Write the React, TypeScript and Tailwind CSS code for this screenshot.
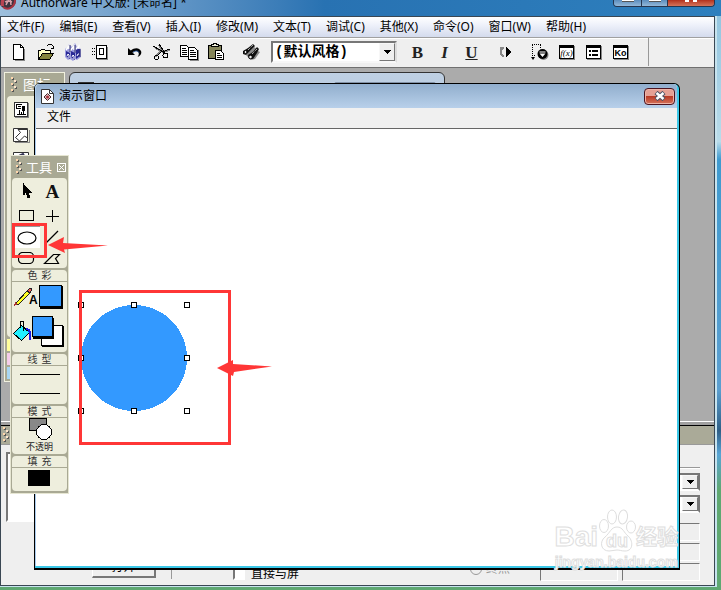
import React from "react";

type IconProps = { w?: number; h?: number; children: React.ReactNode; smooth?: boolean };

function Icon({ w = 18, h = 18, children, smooth }: IconProps) {
  return (
    <svg
      width={w}
      height={h}
      viewBox={`0 0 ${w} ${h}`}
      fill="none"
      stroke="none"
      shapeRendering={smooth ? "auto" : "crispEdges"}
      aria-hidden="true"
      className="shrink-0"
    >
      {children}
    </svg>
  );
}

const menus = [
  "文件(F)", "编辑(E)", "查看(V)", "插入(I)", "修改(M)", "文本(T)",
  "调试(C)", "其他(X)", "命令(O)", "窗口(W)", "帮助(H)",
];

function ToolButton({ label, children }: { label: string; children: React.ReactNode }) {
  return (
    <button aria-label={label} className="flex h-6 w-[27px] shrink-0 items-center justify-center">
      {children}
    </button>
  );
}

function NewIcon() {
  return (
    <Icon>
      <path d="M5 17h9v-11h1v12h-10z" fill="#888" />
      <path d="M3.500 1.500h7l3 3v12h-10z" fill="#fff" stroke="#000" />
      <path d="M10.500 1.500v3h3" stroke="#000" />
    </Icon>
  );
}
function OpenIcon() {
  return (
    <Icon>
      <path d="M1.500 16.500v-9h2l1-1h3l1 1h5v3" fill="#ffffc6" stroke="#000" />
      <path d="M1.500 16.500l4-6h11l-4 6z" fill="#84843c" stroke="#000" />
      <path d="M9.500 3.500l2-2h3l2 2v2m-3 0h3v-3" stroke="#000" />
    </Icon>
  );
}
function SaveIcon() {
  return (
    <Icon smooth>
      <path d="M1 6l3-2 1-3 3 3 3-4 2 4 2-1 2 4v7l-4 3-2-1-2 2-3-2-2 1-3-3z" fill="#9c9cde" />
      <path d="M2 8l4 2v6l-4-3zM7 8l4 2v7l-4-3zM12 7l4-2v8l-4 3z" fill="#292996" />
      <path d="M2 7l3-4v3M6 8l4-5v4M12 6l3-3v3" stroke="#fff" strokeWidth="1.500" />
      <path d="M3 13l1-2 1 1v3M8 14l1-2 1 1v3M13 13l1-2 1 0" stroke="#fff" />
      <path d="M6 2v7M11 2v8M16 6v8" stroke="#34346e" />
    </Icon>
  );
}
function ImportIcon() {
  return (
    <Icon>
      <path d="M6 16h10V4h1v13H6z" fill="#888" />
      <path d="M5.500 2.500h10v13h-10z" fill="#fff" stroke="#000" />
      <path d="M8.500 5.500h4v6h-4z" stroke="#000" />
      <path d="M1 5.500h6M1 8.500h6M1 11.500h6" stroke="#000" strokeDasharray="1 1" />
    </Icon>
  );
}
function UndoIcon() {
  return (
    <Icon smooth>
      <path d="M2 5v7h7l-2.500-2.500c2-2 5-2 6 0 .8 1.700 0 3-1 4.500 3-1.200 4.500-3.500 3.500-6C13.500 4.500 8.500 4 4.800 7.600z" fill="#000" />
      <path d="M7 9.500c2-2 5-2 6 0" stroke="#23539c" />
    </Icon>
  );
}
function CutIcon() {
  return (
    <Icon w={20}>
      <path d="M7 2l6 9M2 4l11 6M10 9l8-2M9 8L3 14" stroke="#888" strokeWidth="2" />
      <path d="M7 1l6 9M1 3l12 7M10 9l8-3M10 8l-5 5" stroke="#000" strokeWidth="1" />
      <circle cx="4.500" cy="14.500" r="2" stroke="#000" />
      <circle cx="13.500" cy="12.500" r="2.500" stroke="#000" />
    </Icon>
  );
}
function CopyIcon() {
  return (
    <Icon w={20}>
      <path d="M1.500 2.500h6l2 2v9h-8z" fill="#fff" stroke="#000" />
      <path d="M3 5.500h4M3 7.500h5M3 9.500h5M3 11.500h5" stroke="#000" />
      <path d="M11 17h8V7h1v11h-9z" fill="#888" />
      <path d="M9.500 4.500h6l3 3v9h-9z" fill="#fff" stroke="#000" />
      <path d="M11 7.500h4M11 9.500h6M11 11.500h6M11 13.500h6" stroke="#000" />
    </Icon>
  );
}
function PasteIcon() {
  return (
    <Icon>
      <path d="M1.500 2.500h13v13h-13z" fill="#84845a" stroke="#000" />
      <path d="M4.500 3.500h7v-2h-2v-1h-3v1h-2z" fill="#efefdc" stroke="#000" />
      <path d="M8.500 7.500h5l3 3v6h-8z" fill="#fff" stroke="#000" />
      <path d="M10 10.500h3M10 12.500h5M10 14.500h5" stroke="#000" />
    </Icon>
  );
}
function FindIcon() {
  return (
    <Icon smooth>
      <path d="M4 12l8-8 3 2-3 5 4-3 2 1-5 7-4 1z" fill="#8a8a8a" />
      <path d="M1 8l5-3 5-4 2 2-4 4-5 5-3-1zM6 12l5-3 4-5 2 2-2 4-4 6-4-1z" fill="#111" />
      <circle cx="3.500" cy="9" r="1.500" fill="#efefef" stroke="#000" />
      <circle cx="8.500" cy="14" r="1.800" fill="#efefef" stroke="#000" />
      <path d="M6 7l5-5M10 11l5-5" stroke="#eee" strokeDasharray="1 1" />
    </Icon>
  );
}
function StepIcon() {
  return (
    <Icon>
      <path d="M3 4h4v2H6v1H5v4h1v1h1v2H5v-1H4v-1H3z" fill="#888" />
      <path d="M9 4h1v1h1v1h1v1h1v1h1v2h-1v1h-1v1h-1v1h-1v1H9z" fill="#000" />
    </Icon>
  );
}
function ControlIcon() {
  return (
    <Icon smooth>
      <path d="M1 1.500h9M9.500 2v3M1.500 2v13M1 12.500h3" stroke="#000" strokeDasharray="1 1" />
      <path d="M0 14h4l-2 3z" fill="#000" />
      <circle cx="12.500" cy="12" r="5" fill="#888" />
      <circle cx="11.500" cy="11" r="5" fill="#000" />
      <path d="M8.500 8.500h6v1h-6zM8.500 10.500h6l-3 3.500z" fill="#fff" />
    </Icon>
  );
}
function Boxed({ children }: { children: React.ReactNode }) {
  return (
    <span className="flex h-[14px] w-[15px] items-center justify-center overflow-hidden border border-t-[3px] border-black bg-white leading-none text-black shadow-[1px_1px_0_#888]">
      {children}
    </span>
  );
}

function Gripper() {
  return (
    <Icon w={8} h={16}>
      {[0, 6, 12].map((y) => (
        <g key={y}>
          <path d={`M2 ${y}h2v2h-2z`} fill="#ffd7ad" />
          <path d={`M4 ${y + 1}h1v2h-2v-1h1z`} fill="#555" />
        </g>
      ))}
      {[3, 9].map((y) => (
        <g key={y}>
          <path d={`M5 ${y}h2v2h-2z`} fill="#ffe6cc" />
          <path d={`M7 ${y + 1}h1v2h-2v-1h1z`} fill="#555" />
        </g>
      ))}
    </Icon>
  );
}

function TitleBar() {
  return (
    <header className="flex h-4 items-start">
      <svg width="18" height="18" viewBox="0 0 18 18" className="-mt-2 shrink-0" aria-hidden="true">
        <circle cx="7.500" cy="8.500" r="8.500" fill="#3c3540" />
        <path d="M1 14C-1 6 6-1 14 4c-6-2-11 2-10 10z" fill="#b94352" />
        <path d="M6 13l4-8 1 8M5 10c3-2 5-1 7 0" stroke="#dba1aa" strokeWidth="1.500" fill="none" />
        <path d="M3 15c5 4 12 0 12-7" stroke="#a83442" strokeWidth="2" fill="none" />
      </svg>
      <h1 className="-mt-[6px] ml-[3px] flex-1 whitespace-nowrap text-[12px] leading-[18px] text-black">
        Authorware 中文版: [未命名] *
      </h1>
      <div className="mr-1.5 flex h-[7px] overflow-hidden rounded-b border border-t-0 border-[#26364f]">
        <button aria-label="最小化" className="flex w-7 justify-center border-r border-[#26364f] bg-gradient-to-b from-[#5b8dbd] to-[#94b8d8]">
          <span className="h-0.5 w-3 border-b border-[#555] bg-white" />
        </button>
        <button aria-label="最大化" className="flex w-[26px] justify-center border-r border-[#26364f] bg-gradient-to-b from-[#5b8dbd] to-[#94b8d8]">
          <span className="h-0.5 w-3 border-b border-[#555] bg-white" />
        </button>
        <button aria-label="关闭" className="flex w-[46px] justify-center gap-1 bg-gradient-to-b from-[#b3301c] to-[#d4735a]">
          <span className="h-0.5 w-1 bg-white" />
          <span className="h-0.5 w-1 bg-white" />
        </button>
      </div>
    </header>
  );
}

function Toolbar() {
  return (
    <div className="flex h-[31px] items-center border-b border-[#707070] bg-[#efefef] pl-1 shadow-[inset_0_1px_0_#a0a0a0,inset_0_2px_0_#fff]">
      <ToolButton label="新建"><NewIcon /></ToolButton>
      <ToolButton label="打开"><OpenIcon /></ToolButton>
      <ToolButton label="保存"><SaveIcon /></ToolButton>
      <ToolButton label="导入"><ImportIcon /></ToolButton>
      <div className="ml-2 flex">
        <ToolButton label="撤消"><UndoIcon /></ToolButton>
        <ToolButton label="剪切"><CutIcon /></ToolButton>
        <ToolButton label="复制"><CopyIcon /></ToolButton>
        <ToolButton label="粘贴"><PasteIcon /></ToolButton>
      </div>
      <div className="ml-2 mr-[7px] flex">
        <ToolButton label="查找"><FindIcon /></ToolButton>
      </div>
      <div className="relative h-[22px] w-[126px] shrink-0 border-2 border-[#777] border-b-[#f7f7f7] border-r-[#ddd] bg-white">
        <select
          aria-label="文本风格"
          className="block h-full w-full appearance-none bg-white pl-0.5 font-['Liberation_Mono','Noto_Sans_CJK_SC',monospace] text-[14px] font-bold leading-[18px] text-black"
        >
          <option>(默认风格)</option>
        </select>
        <ComboArrow />
      </div>
      <div className="ml-[7px] flex font-['Liberation_Serif',serif] text-[17px] font-bold leading-none text-[#222]">
        <ToolButton label="粗体">B</ToolButton>
        <ToolButton label="斜体"><i>I</i></ToolButton>
        <ToolButton label="下划线"><u>U</u></ToolButton>
      </div>
      <div className="ml-[7px] flex">
        <ToolButton label="控制面板"><StepIcon /></ToolButton>
      </div>
      <div className="ml-[7px] flex">
        <ToolButton label="运行"><ControlIcon /></ToolButton>
        <ToolButton label="函数">
          <Boxed><i className="font-['Liberation_Serif',serif] text-[9px]">f(x)</i></Boxed>
        </ToolButton>
        <ToolButton label="变量">
          <Boxed>
            <Icon w={11} h={8}>
              <path d="M1 1h2v2H1zM4 1h6v2H4zM1 5h2v2H1zM4 5h6v2H4z" fill="#000" />
            </Icon>
          </Boxed>
        </ToolButton>
        <ToolButton label="知识对象">
          <Boxed><b className="font-['Liberation_Sans',sans-serif] text-[9px]">Ko</b></Boxed>
        </ToolButton>
      </div>
      <span className="ml-[14px] h-7 w-px bg-[#999]" />
    </div>
  );
}

function ComboArrow() {
  return (
    <span className="pointer-events-none absolute bottom-0 right-0 top-0 flex w-4 items-center justify-center border border-b-[#777] border-l-[#f7f7f7] border-r-[#777] border-t-[#f7f7f7] bg-[#efefef]">
      <Icon w={7} h={4}>
        <path d="M0 0h7v1H6v1H5v1H4v1H3V3H2V2H1V1H0z" fill="#000" />
      </Icon>
    </span>
  );
}

function IconPalette() {
  return (
    <aside className="absolute bottom-[39px] left-[3px] top-1 flex w-[61px] flex-col border border-[#f1f1df] bg-[#a9a994] p-0.5 pt-0">
      <div className="flex h-[23px] items-center gap-1.5 pl-0.5 text-[14px] text-white">
        <Gripper />
        <span className="whitespace-nowrap">图标</span>
      </div>
      <div className="flex flex-1 flex-col items-start gap-2 rounded bg-[#eeeedd] pl-1.5 pt-[5px]">
        <Icon w={17} h={17}>
          <path d="M2 16h13V2h1v15H2z" fill="#888" />
          <path d="M1.500 1.500h13v14h-13z" fill="#fff" stroke="#333" />
          <path d="M3 3h6v1H3zM3 4h1v4H3zM4 7h4v1H4zM9 5h3v5H9zM5 5h3v1H5zM6 9h1v4H6zM4 13h9v1H4zM10 10h1v3h-1zM8 11h1v2H8z" fill="#000" />
        </Icon>
        <Icon w={17} h={17} smooth>
          <path d="M2 16h14V4h1v13H2z" fill="#888" />
          <path d="M.5 2.500h14v13H.5z" fill="#fff" stroke="#333" />
          <path d="M2.500 11.500l5-5-2.500-3h9.500V12l-3-2-5 5z" fill="#fff" stroke="#333" />
        </Icon>
        <Icon w={17} h={17} smooth>
          <path d="M.5 1.500h15v13h-15z" fill="#fff" stroke="#333" />
          <path d="M6 5l4-2 3 5" stroke="#335" strokeWidth="2" />
        </Icon>
      </div>
      <div className="mt-0.5 h-3 w-full bg-[#ffff9c]" />
      <div className="mt-0.5 h-3 w-full bg-[#f5cdea]" />
      <div className="mt-0.5 h-3 w-full bg-[#a8d6f3]" />
    </aside>
  );
}

function FieldBox({ className }: { className: string }) {
  return <div className={`h-[18px] border border-[#777] border-b-white border-r-white bg-[#efefef] ${className}`} />;
}

function PropertyCombo({ label }: { label: string }) {
  return (
    <div className="relative h-[18px] border-2 border-[#777] border-b-white border-r-[#777] bg-white">
      <select aria-label={label} className="block h-full w-full appearance-none bg-white" />
      <ComboArrow />
    </div>
  );
}

function PropertiesPanel() {
  return (
    <section className="shrink-0 border-t border-white bg-[#efefef]">
      <div className="h-[3px] bg-[#a0a0a0]" />
      <div className="flex h-5 items-center border-b border-t border-b-[#999] border-t-black bg-[#aaaa98]">
        <Gripper />
      </div>
      <div className="flex h-[140px]">
        <div className="flex flex-1 flex-col justify-between pl-[5px] pt-[7px]">
          <div className="h-[70px] w-[90px] border-2 border-[#777] border-b-white border-r-white bg-white" />
          <div className="flex h-7 items-start text-[12px] text-black">
            <button className="ml-[86px] h-[21px] w-16 border border-b-2 border-r-2 border-white border-b-[#777] border-r-[#777] bg-[#efefef] leading-[18px]">
              打开
            </button>
            <span className="ml-[15px] h-[22px] w-px bg-[#999]" />
            <label className="ml-[61px] flex h-[22px] items-center gap-1.5 self-end leading-4">
              <input type="checkbox" className="size-3 appearance-none border-2 border-b-white border-l-[#777] border-r-white border-t-[#777] bg-white" />
              直接与屏
            </label>
            <label className="ml-auto mr-[30px] flex h-6 items-center gap-1 leading-4 text-[#999]">
              <input type="radio" disabled className="size-3 appearance-none rounded-full border border-[#999] bg-[#efefef]" />
              终点
            </label>
          </div>
        </div>
        <div className="mr-[14px] flex w-[160px] flex-col pt-[22px]">
          <div className="mb-1 h-0.5 border-t border-[#999] bg-white" />
          <div className="flex flex-col gap-1">
            <PropertyCombo label="开始" />
            <PropertyCombo label="速率" />
          </div>
          <div className="mt-2.5 flex flex-col gap-0.5">
            <FieldBox className="w-full" />
            <FieldBox className="w-full" />
            <div className="flex gap-1">
              <FieldBox className="flex-1" />
              <FieldBox className="flex-1" />
            </div>
          </div>
        </div>
      </div>
    </section>
  );
}

const handlePositions = [5, 58, 111];

function Watermark() {
  return (
    <div className="absolute bottom-[19px] right-[43px] flex flex-col items-center font-['Liberation_Sans','Noto_Sans_CJK_SC',sans-serif] font-bold text-white [-webkit-text-stroke:1px_#dedede]">
      <div className="flex h-11 items-end">
        <span className="text-[28px] leading-8">Bai</span>
        <span className="relative flex h-11 w-[38px] items-end justify-center">
          <svg width="38" height="44" viewBox="0 0 38 44" className="absolute inset-0" fill="#fff" stroke="#dedede" aria-hidden="true">
            <ellipse cx="6" cy="17" rx="4.500" ry="6.500" />
            <ellipse cx="14" cy="8" rx="4.500" ry="7" />
            <ellipse cx="25" cy="8" rx="4.500" ry="7" transform="rotate(8 25 8)" />
            <ellipse cx="33" cy="18" rx="4.500" ry="6" />
            <path d="M19 18c6 0 7 6 11 9 5 4 6 15-3 15-4 0-5-1-8-1s-5 1-8 1c-8 0-10-9-4-14 5-4 6-10 12-10z" />
          </svg>
          <span className="relative text-[18px] leading-6">du</span>
        </span>
        <span className="text-[21px] leading-8">经验</span>
      </div>
      <span className="text-[14px] leading-[18px]">jingyan.baidu.com</span>
    </div>
  );
}

function PresentationWindow() {
  return (
    <section className="absolute bottom-5 left-[34px] right-[41px] top-[83px] flex rounded-t-md border border-b-2 border-black bg-[#3cc8e8]">
      <div className="mb-0.5 mr-0.5 flex min-w-0 flex-1 flex-col rounded-t border-l border-[#a9cbee] bg-white">
        <div className="flex h-6 shrink-0 items-center rounded-t bg-gradient-to-b from-[#91aecd] to-[#b8d0ea] pl-[5px] pr-0.5">
          <Icon w={13} h={15} smooth>
            <path d="M.5.5h8l4 4v10H.5z" fill="#fff" stroke="#333" />
            <path d="M8.500.5v4h4" stroke="#333" />
            <path d="M6.500 4.500l3.500 3.500-3.500 3.500L3 8z" fill="#e3b9b9" stroke="#4b292d" />
            <circle cx="6.500" cy="8" r="1.500" fill="#a4323c" />
          </Icon>
          <h2 className="ml-[5px] flex-1 text-[12px] leading-4 text-black">演示窗口</h2>
          <button aria-label="关闭窗口" className="flex h-[17px] w-[31px] items-center justify-center rounded-sm border border-[#4c1420] bg-gradient-to-b from-[#e5a094] from-45% via-[#b93a25] via-50% to-[#d3715a] shadow-[inset_0_0_0_1px_#eeb4a8]">
            <svg width="12" height="10" viewBox="0 0 12 10" aria-hidden="true">
              <path d="M2 1.500l8 7M10 1.500l-8 7" stroke="#4b5365" strokeWidth="4.500" />
              <path d="M2.500 2l7 6M9.500 2l-7 6" stroke="#fff" strokeWidth="2.500" />
            </svg>
          </button>
        </div>
        <nav className="flex h-[21px] shrink-0 items-start border-b border-[#666] bg-[#f0f0f0] pl-[11px]">
          <button className="text-[12px] leading-[18px] text-black">文件</button>
        </nav>
        <div className="relative flex-1 overflow-hidden bg-white">
          <svg width="116" height="116" viewBox="0 0 116 116" className="absolute left-10 top-[171px]" shapeRendering="crispEdges" aria-label="圆形">
            <circle cx="58" cy="58" r="53" fill="#3399ff" />
            {handlePositions.flatMap((x) =>
              handlePositions
                .filter((y) => !(x === 58 && y === 58))
                .map((y) => (
                  <rect key={`${x}-${y}`} x={x - 2.5} y={y - 2.5} width="5" height="5" fill="#fff" stroke="#000" />
                )),
            )}
          </svg>
        </div>
      </div>
    </section>
  );
}

function PaletteLabel({ children }: { children: React.ReactNode }) {
  return (
    <h3 className="mt-0.5 flex h-3 justify-center gap-1 rounded-t border-b border-[#a9a994] bg-[#eeeedd] text-[10px] font-normal leading-[10px] text-[#333]">
      {children}
    </h3>
  );
}

function DrawTool({ label, children, active }: { label: string; children: React.ReactNode; active?: boolean }) {
  return (
    <button
      aria-label={label}
      className={active ? "flex items-center justify-center border-t border-[#999] bg-white" : "flex items-center justify-center"}
    >
      {children}
    </button>
  );
}

function ToolPalette() {
  return (
    <aside className="absolute left-2.5 top-[155px] w-[59px] border border-[#e6e6d2] bg-[#a9a994] px-px pb-0.5">
      <div className="flex h-[22px] items-center pl-0.5 text-[13px] text-white">
        <Gripper />
        <h2 className="ml-1 flex-1 whitespace-nowrap leading-4">工具</h2>
        <button aria-label="关闭工具" className="mr-px">
          <Icon w={9} h={9}>
            <path d="M.5.5h8v8h-8z" stroke="#fff" />
            <path d="M2 2l5 5M7 2l-5 5" stroke="#fff" />
          </Icon>
        </button>
      </div>

      <div className="grid h-[90px] grid-cols-2 grid-rows-[26px_22px_22px_20px] rounded bg-[#eeeedd] px-0.5">
        <DrawTool label="选择">
          <Icon w={14} h={16}>
            <path d="M3 0v12h2v-2h1v2h1v3h3v-3H9v-2h3V9h-1V8h-1V7H9V6H8V5H7V4H6V3H5V2H4V0z" fill="#000" />
          </Icon>
        </DrawTool>
        <DrawTool label="文本">
          <span className="font-['Liberation_Serif',serif] text-[19px] font-bold leading-none text-[#111]">A</span>
        </DrawTool>
        <DrawTool label="矩形">
          <Icon w={16} h={14}><path d="M.5 2.500h14v10H.5z" stroke="#000" /></Icon>
        </DrawTool>
        <DrawTool label="直线">
          <Icon w={14} h={14}><path d="M7.500 2v12M1 8.500h13" stroke="#000" /></Icon>
        </DrawTool>
        <DrawTool label="椭圆" active>
          <Icon w={20} h={14} smooth><ellipse cx="10" cy="7" rx="9" ry="6" fill="#fff" stroke="#000" strokeWidth="1.200" /></Icon>
        </DrawTool>
        <DrawTool label="斜线">
          <Icon w={14} h={14} smooth><path d="M1 13L13 1" stroke="#000" strokeWidth="1.200" /></Icon>
        </DrawTool>
        <DrawTool label="圆角矩形">
          <Icon w={17} h={12} smooth><rect x=".5" y=".5" width="15" height="11" rx="4" stroke="#000" strokeWidth="1.200" /></Icon>
        </DrawTool>
        <DrawTool label="多边形">
          <Icon w={18} h={13} smooth><path d="M1.500 11.500l9-9h6l-4 4 3 5z" stroke="#000" strokeWidth="1.200" /></Icon>
        </DrawTool>
      </div>

      <PaletteLabel><span>色</span><span>彩</span></PaletteLabel>
      <div className="h-[70px] rounded-b bg-[#eeeedd]">
        <svg width="55" height="70" viewBox="0 0 55 70" shapeRendering="crispEdges" aria-label="颜色" className="block">
          <path d="M28 4h23v23H28z" fill="#000" />
          <path d="M27.500 3.500h22v21h-22z" fill="#3399ff" stroke="#000" />
          <path d="M4 21l12-13 3 2L7 22l-4 1z" fill="#ffff21" stroke="#222" />
          <path d="M15 9l3-3 2 1-2 4z" fill="#e55" stroke="#222" />
          <path d="M2 24l1-4 3 2z" fill="#a33" />
          <text x="17" y="22" fontFamily="Liberation Sans, sans-serif" fontSize="12" fontWeight="bold" fill="#000">A</text>
          <path d="M30 44h22v21H30z" fill="#000" />
          <path d="M29.500 43.500h21v20h-21z" fill="#fff" stroke="#000" />
          <path d="M21 36h21v21H21z" fill="#000" />
          <path d="M20.500 34.500h20v20h-20z" fill="#3399ff" stroke="#000" />
          <path d="M1.500 51.500l8-8 8 7-8 8z" fill="#21f0ff" stroke="#000" />
          <path d="M8 46v-7h3v10" stroke="#000" fill="none" />
          <path d="M14 47c4 0 4 3 4 11" stroke="#1a1ae6" strokeWidth="2" fill="none" />
        </svg>
      </div>

      <PaletteLabel><span>线</span><span>型</span></PaletteLabel>
      <div className="flex h-[38px] flex-col items-center justify-between rounded-b bg-[#eeeedd] pb-2 pt-2">
        <button aria-label="线宽" className="h-[3px] w-10 border-t border-black" />
        <button aria-label="箭头" className="h-[3px] w-10 border-t border-black" />
      </div>

      <PaletteLabel><span>模</span><span>式</span></PaletteLabel>
      <button className="flex h-9 w-full flex-col items-center rounded-b bg-[#eeeedd] text-[9px] leading-3 text-[#222]">
        <Icon w={26} h={23}>
          <path d="M2.500.5h17v12h-17z" fill="#888" stroke="#000" />
          <circle cx="17" cy="14" r="7.500" fill="#fff" stroke="#000" />
        </Icon>
        <span>不透明</span>
      </button>

      <PaletteLabel><span>填</span><span>充</span></PaletteLabel>
      <div className="flex h-[23px] items-start justify-center rounded-b bg-[#eeeedd] pr-0.5 pt-0.5">
        <button aria-label="填充颜色" className="h-4 w-[22px] bg-black" />
      </div>
    </aside>
  );
}

function Annotations() {
  return (
    <div className="pointer-events-none">
      <div className="absolute left-3 top-[223px] h-[35px] w-[35px] border-[3px] border-[#ff3636]" />
      <svg width="60" height="16" viewBox="0 0 60 16" className="absolute left-12 top-[237px]" aria-hidden="true">
        <path d="M0 8L16 0l-1 6 45 2.500-44 4 1 3.500z" fill="#ff3636" />
      </svg>
      <div className="absolute left-[79px] top-[290px] h-[155px] w-[152px] border-[3px] border-[#ff3636]" />
      <svg width="56" height="16" viewBox="0 0 56 16" className="absolute left-[217px] top-[360px]" aria-hidden="true">
        <path d="M0 8L16 0v4l39 2.500-38 5.500-1 4z" fill="#ff3636" />
      </svg>
    </div>
  );
}

export default function App() {
  return (
    <div className="relative flex min-h-screen flex-col overflow-hidden bg-[linear-gradient(#8fc3df,#b9dcea_24%,#3f9bd0_27%,#5b9fd0_66%,#2f5f86_73%,#58a5d6_77%,#5fa872_83%)] font-['Noto_Sans','Noto_Sans_CJK_SC',sans-serif]">
      <div className="bg-gradient-to-r from-[#9dbfdc] via-[#2872b2] via-45% to-[#2e80be]">
        <TitleBar />
      </div>
      <main className="mb-[3px] mr-1 flex flex-1 flex-col border-b border-r-2 border-[#c7e3ee]">
        <div className="flex flex-1 flex-col border border-t-0 border-[#3a4753]">
          <nav className="flex h-[21px] items-center gap-[15px] whitespace-nowrap border-t border-[#3a4753] bg-gradient-to-b from-white via-[#eef1fa] via-40% to-[#d4dbed] pl-1.5">
            {menus.map((m) => (
              <button key={m} className="text-[12px] leading-4 text-black">{m}</button>
            ))}
          </nav>
          <Toolbar />
          <div className="relative flex-1 bg-[#ababab]">
            <IconPalette />
            <div className="absolute left-[68px] top-1 flex h-24 w-[376px] items-start gap-60 rounded-t-md border border-[#333] bg-gradient-to-b from-[#bfd0e3] to-[#a4bad3] px-2 pt-[9px]">
              <span className="h-1 w-4 bg-[#333]" />
              <span className="h-1 flex-1 rounded border border-[#8292a7] bg-[#c6d5e5]" />
            </div>
          </div>
          <PropertiesPanel />
        </div>
      </main>
      <PresentationWindow />
      <Watermark />
      <ToolPalette />
      <Annotations />
    </div>
  );
}
